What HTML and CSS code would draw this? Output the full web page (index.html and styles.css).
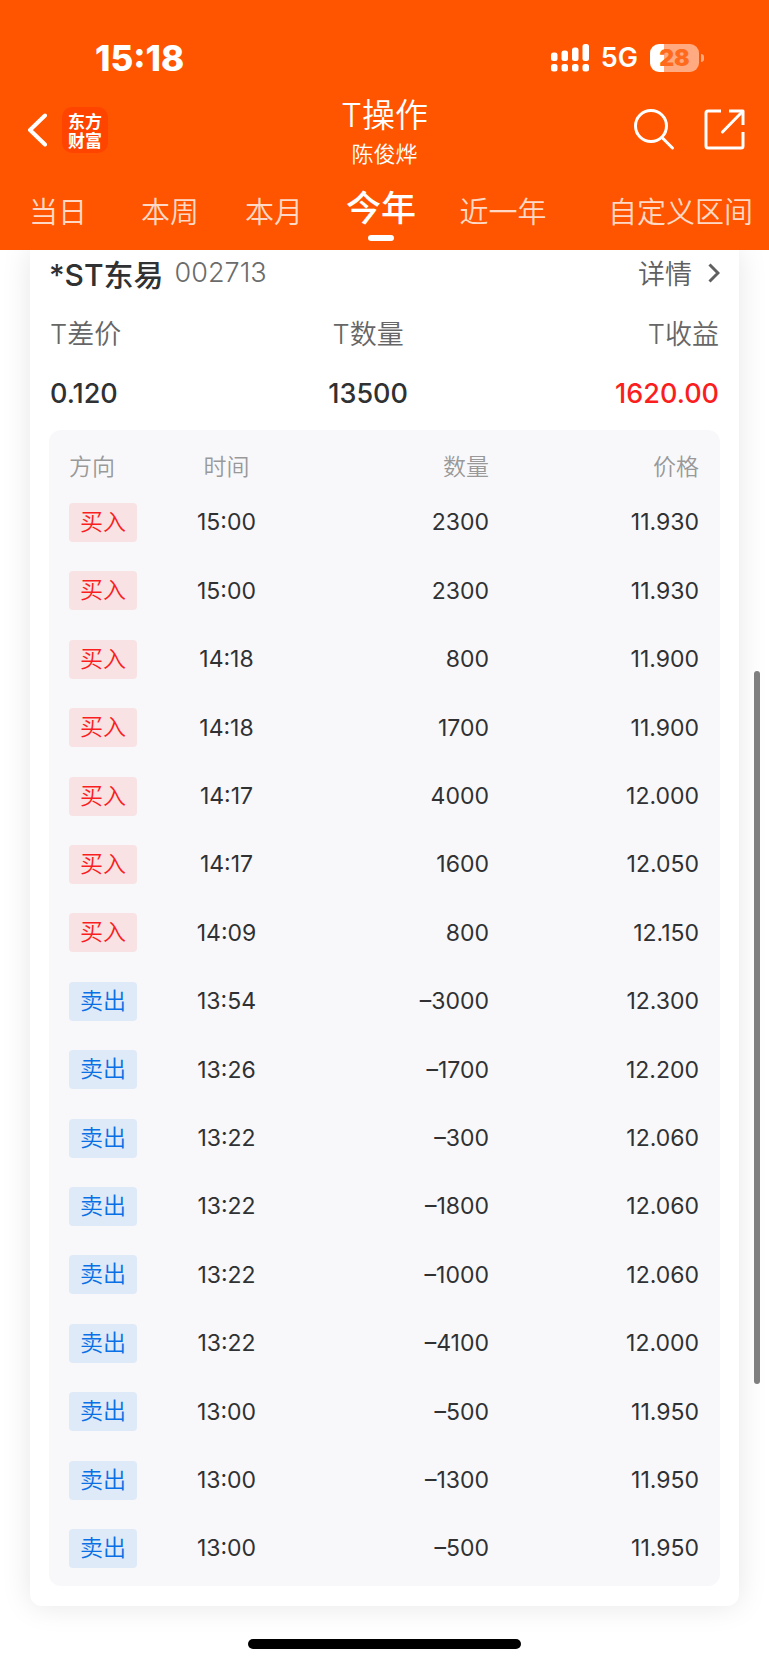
FILE: index.html
```html
<!DOCTYPE html>
<html lang="zh-CN">
<head>
<meta charset="utf-8">
<meta name="viewport" content="width=device-width, initial-scale=1">
<title>T操作</title>
<link rel="stylesheet" href="styles.css">
</head>
<body>
<header class="header">
  <div class="status">
    <time class="clock">15:18</time>
    <div class="status-right">
      <svg class="signal" viewBox="0 0 38 28" aria-hidden="true">
        <rect x="0" y="8.500" width="6.500" height="8.500" rx="2.500"/><rect x="10.500" y="6.500" width="6.500" height="10.500" rx="2.500"/><rect x="21" y="3.500" width="6.500" height="13.500" rx="2.500"/><rect x="31.500" y="0" width="6.500" height="17" rx="2.500"/>
        <rect x="0" y="20" width="6.500" height="7.500" rx="2.500"/><rect x="10.500" y="20" width="6.500" height="7.500" rx="2.500"/><rect x="21" y="20" width="6.500" height="7.500" rx="2.500"/><rect x="31.500" y="20" width="6.500" height="7.500" rx="2.500"/>
      </svg>
      <span class="network">5G</span>
      <span class="battery">28</span>
    </div>
  </div>
  <div class="nav">
    <div class="nav-left">
      <button class="icon-button" aria-label="返回"><svg class="back" viewBox="0 0 20 36"><path d="M18 3.500 3 18 18 32.500"/></svg></button>
      <a class="logo" href="#">东方财富</a>
    </div>
    <div class="nav-title">
      <h1 class="title">T操作</h1>
      <p class="owner">陈俊烨</p>
    </div>
    <div class="nav-right">
      <button class="icon-button" aria-label="搜索"><svg class="tool" viewBox="0 0 42 42"><circle cx="18" cy="17" r="15.500"/><path d="M29 28.500 39.500 39"/></svg></button>
      <button class="icon-button" aria-label="分享"><svg class="tool" viewBox="0 0 42 42"><path stroke-linecap="butt" d="M18 2H5a2 2 0 0 0-2 2V37a2 2 0 0 0 2 2H38a2 2 0 0 0 2-2V23M26 2H40V16"/><path d="M39.500 2.500 19.500 23"/></svg></button>
    </div>
  </div>
  <nav class="tabs">
    <button class="tab">当日</button>
    <button class="tab">本周</button>
    <button class="tab">本月</button>
    <button class="tab tab-active">今年</button>
    <button class="tab">近一年</button>
    <button class="tab tab-last">自定义区间</button>
  </nav>
</header>
<main class="content">
  <section class="card">
    <div class="card-head">
      <h2 class="stock">*ST东易</h2>
      <span class="code">002713</span>
      <a class="detail" href="#">详情<svg class="chevron" viewBox="0 0 12 20"><path d="M1.500 1.500 10 10 1.500 18.500"/></svg></a>
    </div>
    <dl class="summary">
      <div class="stat"><dt>T差价</dt><dd>0.120</dd></div>
      <div class="stat"><dt>T数量</dt><dd>13500</dd></div>
      <div class="stat"><dt>T收益</dt><dd class="profit">1620.00</dd></div>
    </dl>
    <div class="panel">
      <table class="trades">
        <thead><tr><th class="side">方向</th><th class="time">时间</th><th>数量</th><th>价格</th></tr></thead>
        <tbody>
          <tr><td class="side"><span class="tag buy">买入</span></td><td class="time">15:00</td><td>2300</td><td>11.930</td></tr>
          <tr><td class="side"><span class="tag buy">买入</span></td><td class="time">15:00</td><td>2300</td><td>11.930</td></tr>
          <tr><td class="side"><span class="tag buy">买入</span></td><td class="time">14:18</td><td>800</td><td>11.900</td></tr>
          <tr><td class="side"><span class="tag buy">买入</span></td><td class="time">14:18</td><td>1700</td><td>11.900</td></tr>
          <tr><td class="side"><span class="tag buy">买入</span></td><td class="time">14:17</td><td>4000</td><td>12.000</td></tr>
          <tr><td class="side"><span class="tag buy">买入</span></td><td class="time">14:17</td><td>1600</td><td>12.050</td></tr>
          <tr><td class="side"><span class="tag buy">买入</span></td><td class="time">14:09</td><td>800</td><td>12.150</td></tr>
          <tr><td class="side"><span class="tag sell">卖出</span></td><td class="time">13:54</td><td>–3000</td><td>12.300</td></tr>
          <tr><td class="side"><span class="tag sell">卖出</span></td><td class="time">13:26</td><td>–1700</td><td>12.200</td></tr>
          <tr><td class="side"><span class="tag sell">卖出</span></td><td class="time">13:22</td><td>–300</td><td>12.060</td></tr>
          <tr><td class="side"><span class="tag sell">卖出</span></td><td class="time">13:22</td><td>–1800</td><td>12.060</td></tr>
          <tr><td class="side"><span class="tag sell">卖出</span></td><td class="time">13:22</td><td>–1000</td><td>12.060</td></tr>
          <tr><td class="side"><span class="tag sell">卖出</span></td><td class="time">13:22</td><td>–4100</td><td>12.000</td></tr>
          <tr><td class="side"><span class="tag sell">卖出</span></td><td class="time">13:00</td><td>–500</td><td>11.950</td></tr>
          <tr><td class="side"><span class="tag sell">卖出</span></td><td class="time">13:00</td><td>–1300</td><td>11.950</td></tr>
          <tr><td class="side"><span class="tag sell">卖出</span></td><td class="time">13:00</td><td>–500</td><td>11.950</td></tr>
        </tbody>
      </table>
    </div>
  </section>
</main>
<footer class="home"><div class="home-bar"></div></footer>
<div class="scroll-thumb"></div>
</body>
</html>
```
FILE: styles.css
```css
* { box-sizing: border-box; }

body {
  margin: 0;
  position: relative;
  background: #fff;
  color: #303133;
  font-family: Inter, "Noto Sans CJK SC", sans-serif;
  font-size: 23px;
}

h1, h2, p, dl, dd { margin: 0; font-weight: inherit; }
a { color: inherit; text-decoration: none; }
button { border: 0; padding: 0; background: none; color: inherit; font: inherit; }
svg { display: block; fill: none; stroke-linecap: round; stroke-linejoin: round; }

/* Header */
.header {
  position: relative;
  z-index: 1;
  background: #ff5500;
  color: #fff;
}

.status {
  display: flex;
  align-items: center;
  justify-content: space-between;
  height: 88px;
  padding: 27px 70px 0 95px;
}
.clock { font-size: 35px; font-weight: 800; }
.status-right { display: flex; align-items: center; gap: 12px; }
.signal { width: 38px; height: 28px; fill: #fff; }
.network { font-size: 27px; font-weight: 600; }
.battery {
  position: relative;
  width: 49px;
  height: 28px;
  border-radius: 9px;
  background: linear-gradient(to right, #fff 14px, #ffaa80 14px);
  color: #ff6a1c;
  font-size: 23px;
  font-weight: 900;
  line-height: 28px;
  text-align: center;
}
.battery::after {
  content: "";
  position: absolute;
  top: 10px;
  left: 51px;
  width: 3px;
  height: 8px;
  border-radius: 0 4px 4px 0;
  background: #ffaa80;
}

.nav {
  display: grid;
  grid-template-columns: 1fr auto 1fr;
  align-items: center;
  height: 84px;
  padding: 0 24px;
}
.nav-left { display: flex; align-items: center; gap: 15px; padding-left: 3px; }
.back { width: 20px; height: 36px; stroke: #fff; stroke-width: 4; }
.logo {
  width: 46px;
  height: 46px;
  padding: 4px 6px;
  border-radius: 10px;
  background: #ff4400;
  font-family: "Noto Sans CJK SC", sans-serif;
  font-size: 17px;
  font-weight: 700;
  line-height: 19px;
  word-break: break-all;
}
.nav-title { text-align: center; }
.title { font-size: 33px; font-weight: 350; line-height: 48px; }
.owner { font-size: 22px; font-weight: 350; line-height: 30px; }
.nav-right { display: flex; justify-content: flex-end; gap: 28px; }
.tool { width: 42px; height: 42px; stroke: #fff; stroke-width: 3; }

.tabs {
  display: grid;
  grid-template-columns: 116fr 108fr 100fr 114fr 130fr 201fr;
  height: 78px;
}
.tab {
  padding-bottom: 2px;
  color: #ffd9c6;
  font-size: 29px;
  font-weight: 350;
  white-space: nowrap;
}
.tab-active {
  position: relative;
  padding-bottom: 12px;
  color: #fff;
  font-size: 35px;
  font-weight: 500;
}
.tab-active::after {
  content: "";
  position: absolute;
  bottom: 9px;
  left: 50%;
  width: 26px;
  height: 6px;
  margin-left: -13px;
  border-radius: 3px;
  background: #fff;
}
.tab-last { padding-right: 16px; text-align: right; }

/* Card */
.content { padding: 0 30px; }
.card {
  padding: 0 19px 20px;
  border-radius: 0 0 12px 12px;
  background: #fff;
  box-shadow: 0 0 30px rgba(0, 0, 0, 0.1);
}
.card-head {
  display: flex;
  align-items: center;
  height: 45px;
}
.stock { font-size: 30px; font-weight: 500; }
.code { margin-left: 11px; color: #6b6b6b; font-size: 27px; font-weight: 350; }
.detail {
  display: flex;
  align-items: center;
  gap: 16px;
  margin-left: auto;
  color: #606060;
  font-size: 27px;
  font-weight: 350;
}
.chevron { width: 12px; height: 20px; stroke: #606060; stroke-width: 3; stroke-linecap: butt; stroke-linejoin: miter; }

.summary { display: flex; justify-content: space-between; height: 135px; padding: 12px 1px 0; }
.stat { text-align: center; }
.stat:first-child { text-align: left; }
.stat:last-child { text-align: right; }
.stat dt { color: #666; font-size: 27px; font-weight: 350; line-height: 56px; }
.stat dd { font-size: 27px; font-weight: 450; line-height: 61px; }
.stat .profit { color: #fa1e1e; }

/* Trades */
.panel {
  padding: 14px 21px 4px 20px;
  border-radius: 12px;
  background: #f8f8fb;
}
.trades { width: 100%; table-layout: fixed; border-collapse: collapse; }
.trades th { height: 44px; padding: 0 0 2px; color: #999; font-size: 23px; font-weight: 350; text-align: right; }
.trades td { height: 68px; padding: 0; font-size: 23px; font-weight: 375; text-align: right; }
.trades tr:nth-child(5n+2) td,
.trades tr:nth-child(5n+4) td { height: 69px; }
.trades th.side { width: 16.6667%; text-align: left; }
.trades th.time { width: 16.6667%; }
.trades .side { text-align: left; }
.trades .time { text-align: center; }
.tag {
  display: block;
  width: 68px;
  border-radius: 4px;
  font-size: 23px;
  font-weight: 350;
  line-height: 39px;
  text-align: center;
}
.buy { background: #f8e2e4; color: #fa1e1e; }
.sell { background: #deeaf7; color: #0a70e6; }

/* Bottom area */
.home { display: flex; justify-content: center; padding: 33px 0 16px; }
.home-bar { width: 273px; height: 10px; border-radius: 5px; background: #000; }
.scroll-thumb {
  position: absolute;
  top: 671px;
  right: 9px;
  width: 6px;
  height: 713px;
  border-radius: 3px;
  background: #7f7f7f;
}
```
